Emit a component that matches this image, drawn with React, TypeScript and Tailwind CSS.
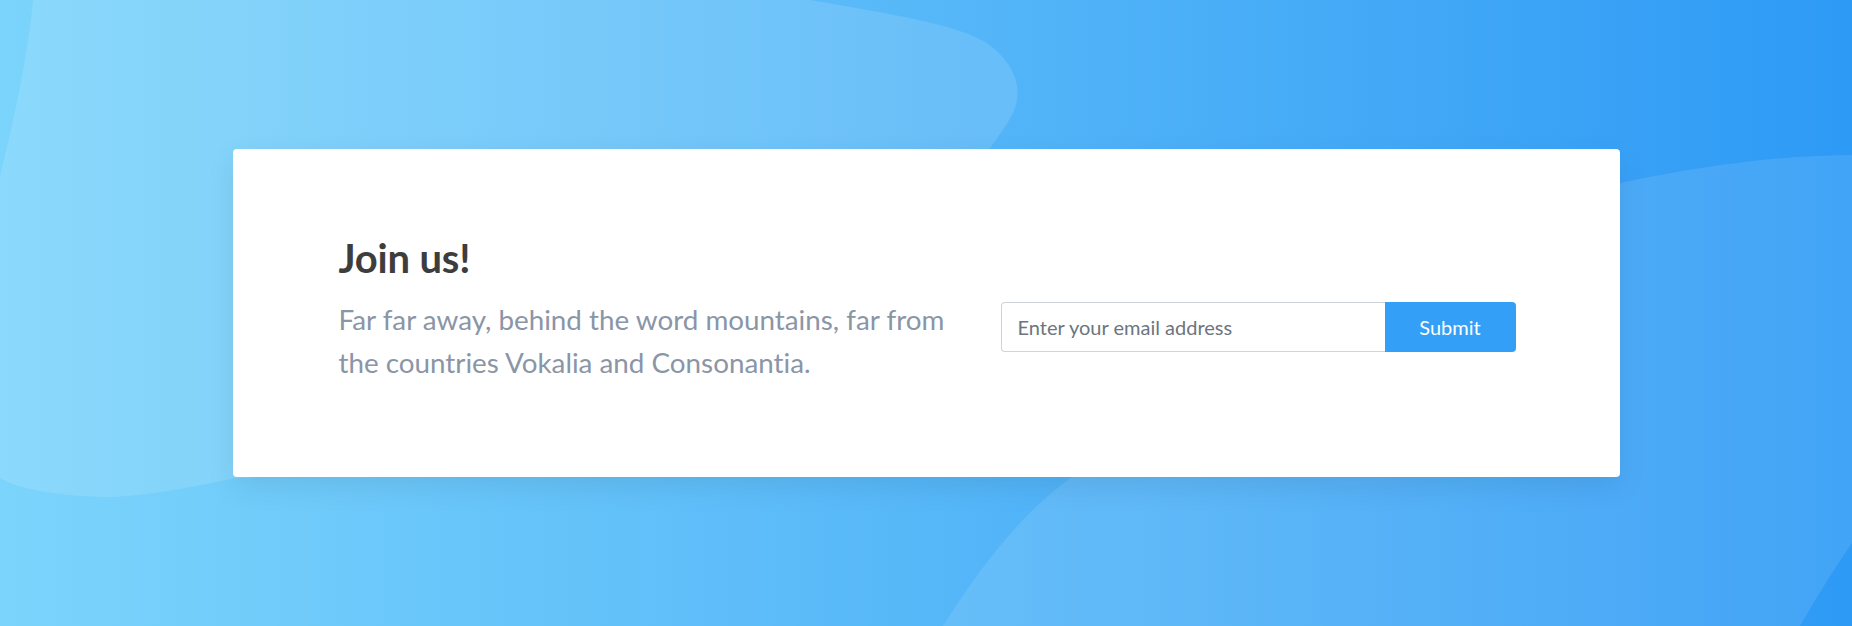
import React from "react";

const Backdrop = () => (
  <svg
    className="absolute inset-0 h-full w-full"
    viewBox="0 0 1852 626"
    preserveAspectRatio="none"
    aria-hidden="true"
  >
    <path
      d="M33,0 L810,0 C890,14 955,24 985,42 C1015,62 1028,92 1008,122 C985,158 930,230 820,320 C700,410 480,470 236,478 C180,490 130,498 100,497 C55,495 20,490 0,478 L0,176 C14,120 28,55 33,0 Z"
      fill="#ffffff"
      fillOpacity="0.12"
    />
    <path
      d="M943,626 C985,560 1025,510 1072,477 C1200,360 1420,230 1620,183 C1700,166 1780,155 1852,155 L1852,543 C1832,572 1815,600 1800,626 Z"
      fill="#ffffff"
      fillOpacity="0.1"
    />
  </svg>
);

export default function App() {
  return (
    <div className="relative flex h-[626px] w-full items-center justify-center overflow-hidden bg-linear-to-r from-[#7bd4fb] to-[#2d9af5] font-['Lato',sans-serif] [font-variant-ligatures:none]">
      <Backdrop />
      <div className="relative flex w-[1387px] gap-[40px] rounded-[4px] bg-white pt-[85px] pb-[93px] pl-[106px] pr-[104px] shadow-[0_10px_30px_rgba(0,0,0,0.08)]">
        <div className="flex-1">
          <h2 className="mb-[16px] text-[40px] font-bold leading-[48px] tracking-[-0.2px] text-[#3d3d3d]">
            Join us!
          </h2>
          <p className="text-[27.8px] leading-[43px] text-[#8a95a6]">
            Far far away, behind the word mountains, far from the countries Vokalia and Consonantia.
          </p>
        </div>
        <form className="flex w-[515px] items-start pt-[68px]" onSubmit={(e) => e.preventDefault()}>
          <input
            type="email"
            placeholder="Enter your email address"
            className="h-[50px] flex-1 rounded-l-[4px] border border-r-0 border-[#ced4da] bg-white px-[16px] text-[20px] text-[#495057] outline-none placeholder:text-[#6c757d]"
          />
          <button
            type="submit"
            className="h-[50px] w-[131px] rounded-r-[4px] bg-[#349ff6] text-[20px] text-white"
          >
            Submit
          </button>
        </form>
      </div>
    </div>
  );
}
